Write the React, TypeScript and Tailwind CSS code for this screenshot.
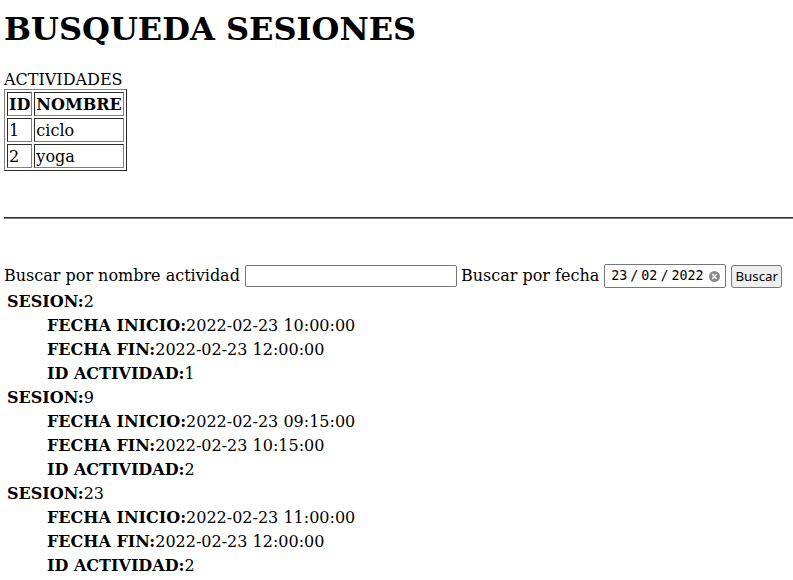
import React from "react";

const sessions = [
  { id: "2", ini: "2022-02-23 10:00:00", fin: "2022-02-23 12:00:00", act: "1" },
  { id: "9", ini: "2022-02-23 09:15:00", fin: "2022-02-23 10:15:00", act: "2" },
  { id: "23", ini: "2022-02-23 11:00:00", fin: "2022-02-23 12:00:00", act: "2" },
];

export default function App() {
  const td =
    "h-[24px] p-[1px] border [border-style:inset] border-[gray] align-middle leading-[19px] text-left";
  return (
    <div className="font-['DejaVu_Serif',serif] text-[16px] text-black bg-white min-h-[580px] w-[793px] overflow-hidden pl-[4px]">
      <h1 className="text-[32px] font-bold leading-[37px] pt-[11px] h-[48px]">BUSQUEDA SESIONES</h1>
      <div className="mt-[22px] h-[19px] leading-[19px]">ACTIVIDADES</div>
      <table className="border-separate border-spacing-[2px] border [border-style:outset] border-[gray]">
        <tbody>
          <tr>
            <th className={td + " w-[25px] font-bold"}>ID</th>
            <th className={td + " w-[90px] font-bold"}>NOMBRE</th>
          </tr>
          <tr>
            <td className={td}>1</td>
            <td className={td}>ciclo</td>
          </tr>
          <tr>
            <td className={td}>2</td>
            <td className={td}>yoga</td>
          </tr>
        </tbody>
      </table>
      <div className="h-[46px]" />
      <div className="h-[2px] border-y [border-style:inset] border-[gray]" />
      <div className="h-[45px]" />
      <div className="flex items-center h-[24px]">
        <span className="leading-[19px] -mt-[1px]">Buscar por nombre actividad</span>
        <input
          type="text"
          className="ml-[5px] w-[212px] h-[22px] border border-[#767676] rounded-[2px] px-[2px] text-[13.33px] font-['DejaVu_Sans',sans-serif] bg-white outline-none"
        />
        <span className="ml-[4px] leading-[19px] -mt-[1px]">Buscar por fecha</span>
        <div className="ml-[5px] w-[122px] h-[24px] border border-[#767676] rounded-[2px] flex items-center pl-[6px] pr-[5px] bg-white">
          <div className="flex items-center font-['DejaVu_Sans_Mono',monospace] text-[13.33px] leading-[16px]">
            <span>23</span>
            <span className="ml-[3px]">/</span>
            <span className="ml-[3px]">02</span>
            <span className="ml-[3px]">/</span>
            <span className="ml-[3px]">2022</span>
          </div>
          <svg className="ml-auto" width="11" height="11" viewBox="0 0 12 12">
            <circle cx="6" cy="6" r="6" fill="#8a8a8a" />
            <path d="M3.9 3.9 L8.1 8.1 M8.1 3.9 L3.9 8.1" stroke="#fff" strokeWidth="1.6" strokeLinecap="round" />
          </svg>
        </div>
        <button className="ml-[5px] w-[51px] h-[23px] border border-[#767676] rounded-[3px] bg-[#efefef] text-[13.33px] font-['Noto_Sans',sans-serif] leading-[16px] flex items-center justify-center">
          Buscar
        </button>
      </div>
      <div className="mt-[1px]">
        {sessions.map((s) => (
          <div key={s.id}>
            <div className="h-[24px] flex items-center pl-[3px] leading-[19px]">
              <b>SESION:</b>
              {s.id}
            </div>
            <div className="h-[24px] flex items-center pl-[43px] leading-[19px]">
              <b>FECHA INICIO:</b>
              {s.ini}
            </div>
            <div className="h-[24px] flex items-center pl-[43px] leading-[19px]">
              <b>FECHA FIN:</b>
              {s.fin}
            </div>
            <div className="h-[24px] flex items-center pl-[43px] leading-[19px]">
              <b>ID ACTIVIDAD:</b>
              {s.act}
            </div>
          </div>
        ))}
      </div>
    </div>
  );
}
